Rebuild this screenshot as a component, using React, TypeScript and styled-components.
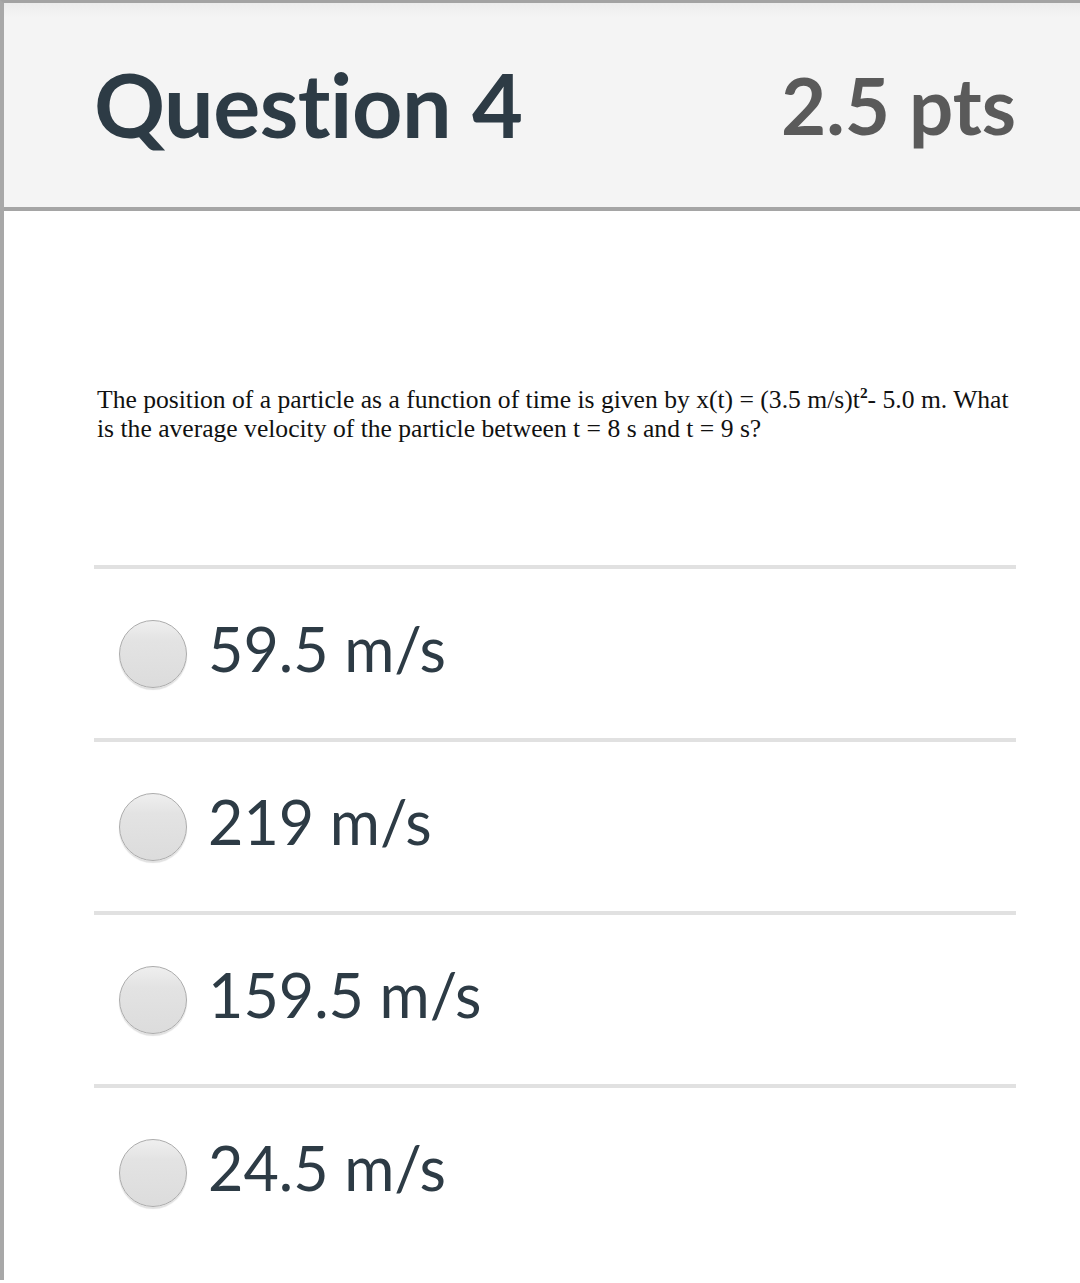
import React from "react";
import styled, { createGlobalStyle } from "styled-components";

const Global = createGlobalStyle`
  html, body { margin: 0; padding: 0; background: #ffffff; }
  body { font-family: Lato, "Liberation Sans", sans-serif; }
`;

const Card = styled.div`
  border-top: 3px solid #a3a3a3;
  border-left: 4px solid #a8a8a8;
  min-height: 1280px;
  box-sizing: border-box;
  background: #ffffff;
`;

const Header = styled.header`
  height: 204px;
  background: linear-gradient(#ececec 0px, #f4f4f4 14px, #f4f4f4 100%);
  border-bottom: 4px solid #a5a5a5;
  display: flex;
  align-items: center;
  justify-content: space-between;
  padding: 0 64px 0 90px;
`;

const Title = styled.h2`
  margin: -2px 0 0;
  font-family: Lato, sans-serif;
  font-weight: 700;
  font-size: 88px;
  color: #2d3b45;
  letter-spacing: -0.5px;
`;

const Points = styled.div`
  font-family: Lato, sans-serif;
  font-weight: 700;
  font-size: 78px;
  color: #5a5a5a;
`;

const Body = styled.section`
  padding: 174px 60px 0 90px;
`;

const QuestionText = styled.p`
  margin: 0 0 122px 3px;
  max-width: 920px;
  font-family: "Liberation Serif", "Times New Roman", serif;
  font-size: 25.6px;
  line-height: 29px;
  color: #111;
`;

const Sup = styled.sup`
  font-size: 0.6em;
  line-height: 0;
  font-weight: 700;
`;

const Answers = styled.div`
  display: flex;
  flex-direction: column;
  width: 922px;
`;

const AnswerRow = styled.label`
  display: flex;
  align-items: center;
  height: 169px;
  border-top: 4px solid #e1e1e1;
  padding-left: 25px;
  gap: 21px;
`;

const Radio = styled.span`
  width: 66px;
  height: 66px;
  border-radius: 50%;
  border: 1.5px solid #acacac;
  background: linear-gradient(#efefef 0%, #e3e3e3 30%, #dcdcdc 100%);
  box-shadow: 0 2px 1px rgba(0, 0, 0, 0.12);
  flex: none;
`;

const AnswerText = styled.span`
  font-family: Lato, sans-serif;
  font-size: 61px;
  color: #2d3b45;
  margin-top: -10px;
`;

const answers = ["59.5 m/s", "219 m/s", "159.5 m/s", "24.5 m/s"];

export default function App() {
  return (
    <>
      <Global />
      <Card>
        <Header>
          <Title>Question 4</Title>
          <Points>2.5 pts</Points>
        </Header>
        <Body>
          <QuestionText>
            The position of a particle as a function of time is given by x(t) = (3.5 m/s)t<Sup>2</Sup>- 5.0 m. What
            is the average velocity of the particle between t = 8 s and t = 9 s?
          </QuestionText>
          <Answers>
            {answers.map((a) => (
              <AnswerRow key={a}>
                <Radio />
                <AnswerText>{a}</AnswerText>
              </AnswerRow>
            ))}
          </Answers>
        </Body>
      </Card>
    </>
  );
}
